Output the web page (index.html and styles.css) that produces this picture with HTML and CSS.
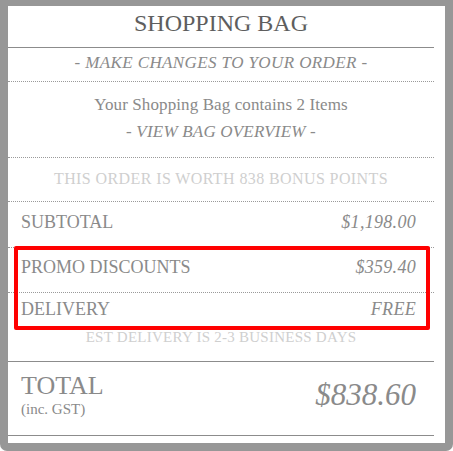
FILE: index.html
```html
<!DOCTYPE html>
<html lang="en">
<head>
    <meta charset="UTF-8">
    <meta name="viewport" content="width=device-width, initial-scale=1.0">
    <title>Shopping Bag</title>
    <link rel="stylesheet" href="styles.css">
</head>
<body>
    <div class="frame">
        <div class="panel">
            <!-- title -->
            <div class="title">SHOPPING BAG</div>

            <div class="link-row">- MAKE CHANGES TO YOUR ORDER -</div>

            <div class="items">
                <p>Your Shopping Bag contains 2 Items</p>
                <p class="link">- VIEW BAG OVERVIEW -</p>
            </div>

            <div class="note bonus">THIS ORDER IS WORTH 838 BONUS POINTS</div>

            <!-- totals -->
            <div class="line subtotal">
                <span>SUBTOTAL</span>
                <span class="price">$1,198.00</span>
            </div>
            <div class="line promo">
                <span>PROMO DISCOUNTS</span>
                <span class="price">$359.40</span>
            </div>
            <div class="line delivery">
                <span>DELIVERY</span>
                <span class="price">FREE</span>
            </div>
            <div class="note est">EST DELIVERY IS 2-3 BUSINESS DAYS</div>

            <div class="total">
                <div class="total-label">
                    <span class="big">TOTAL</span>
                    <span class="gst">(inc. GST)</span>
                </div>
                <span class="total-price">$838.60</span>
            </div>

            <!-- highlight -->
            <div class="highlight"></div>
        </div>
    </div>
</body>
</html>
```

FILE: styles.css
```css
html, body {
    margin: 0;
    padding: 0;
    background-color: #fff;
}

body {
    font-family: Georgia, "Liberation Serif", serif;
    color: #8a8a8a;
}

.frame {
    height: 451px;
    box-sizing: border-box;
    padding: 6px 8px 8px 8px;
    background-color: #979797;
    border-radius: 0 0 7px 7px;
}

.panel {
    position: relative;
    height: 437px;
    background-color: #fff;
    padding-right: 11px;
}

/* header */
.title {
    height: 42px;
    box-sizing: border-box;
    padding-top: 2px;
    font-size: 24px;
    line-height: 30px;
    text-align: center;
    color: #5e5e5e;
    border-bottom: 1px solid #8c8c8c;
}

.link-row {
    height: 34px;
    box-sizing: border-box;
    padding-top: 5px;
    font-size: 17px;
    line-height: 20px;
    letter-spacing: 0.4px;
    font-style: italic;
    text-align: center;
    border-bottom: 1px dotted #9a9a9a;
}

.items {
    height: 76px;
    box-sizing: border-box;
    padding-top: 13px;
    text-align: center;
    font-size: 17px;
    letter-spacing: 0.1px;
    border-bottom: 1px dotted #9a9a9a;
}

.items p {
    margin: 0 0 7px 0;
    line-height: 20px;
}

.items .link {
    font-style: italic;
    letter-spacing: 0.2px;
}

.note {
    text-align: center;
    color: #cfcfcf;
}

.bonus {
    height: 44px;
    box-sizing: border-box;
    padding-top: 12px;
    font-size: 16px;
    line-height: 18px;
    letter-spacing: 0.4px;
    border-bottom: 1px dotted #9a9a9a;
}

/* totals */
.line {
    display: flex;
    justify-content: space-between;
    box-sizing: border-box;
    padding: 9px 18px 0 13px;
    font-size: 18px;
    line-height: 22px;
}

.subtotal {
    height: 46px;
    border-bottom: 1px dotted #9a9a9a;
}

.promo {
    height: 45px;
    padding-top: 8px;
    border-bottom: 1px dotted #9a9a9a;
}

.delivery {
    height: 35px;
    padding-top: 5px;
}

.price {
    font-style: italic;
    letter-spacing: 0.3px;
}

.est {
    height: 34px;
    box-sizing: border-box;
    padding-top: 1px;
    font-size: 15px;
    line-height: 16px;
    letter-spacing: 0.25px;
    border-bottom: 1px solid #8c8c8c;
}

.total {
    height: 74px;
    box-sizing: border-box;
    display: flex;
    justify-content: space-between;
    align-items: flex-start;
    padding: 9px 18px 0 13px;
    border-bottom: 1px solid #8c8c8c;
}

.total-label {
    display: flex;
    flex-direction: column;
}

.big {
    font-size: 26px;
    line-height: 30px;
}

.gst {
    font-size: 15px;
    line-height: 16px;
}

.total-price {
    padding-top: 6px;
    font-size: 31px;
    line-height: 36px;
    font-style: italic;
}

.highlight {
    position: absolute;
    left: 6px;
    top: 240px;
    width: 416px;
    height: 84px;
    box-sizing: border-box;
    border: 4px solid #f00;
    border-radius: 2px;
}
```
